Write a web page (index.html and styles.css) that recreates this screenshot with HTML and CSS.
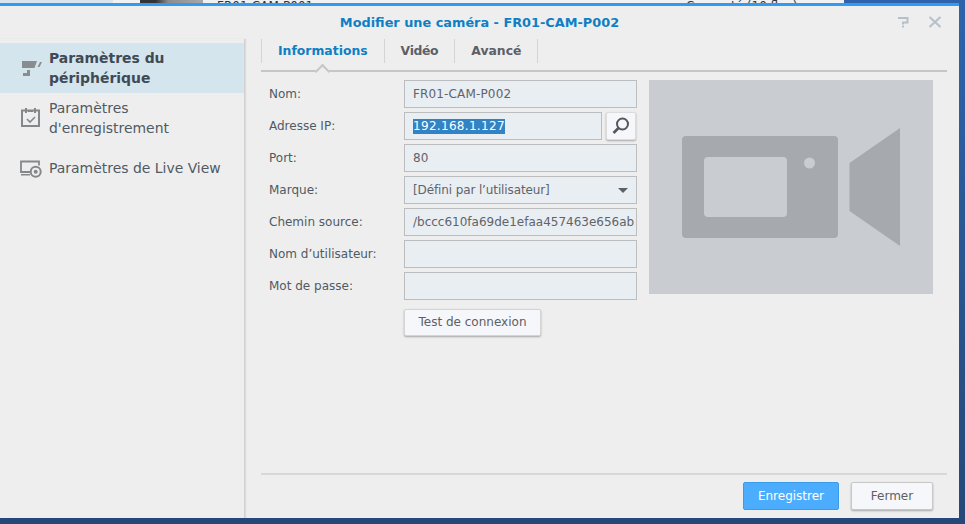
FILE: index.html
```html
<!DOCTYPE html>
<html lang="fr">
<head>
<meta charset="utf-8">
<title>Modifier une caméra</title>
<link rel="stylesheet" href="styles.css">
</head>
<body>
<div class="backdrop">
  <div class="backdrop-left"></div>
  <div class="backdrop-list">
    <div class="thumb"></div>
    <div class="cut-name">FR01-CAM-P001</div>
    <div class="cut-status">Connecté (10 flux)</div>
  </div>
</div>
<div class="window">
  <header class="titlebar">
    <div class="title">Modifier une caméra - FR01-CAM-P002</div>
    <div class="win-tools">
      <svg class="tool" width="14" height="12" viewBox="0 0 14 12"><path d="M1 2H10.500V6.500H6V8.500" fill="none" stroke="#b4c0cb" stroke-width="2"/><rect x="5" y="9.500" width="2" height="2" fill="#b4c0cb"/></svg>
      <svg class="tool" width="14" height="12" viewBox="0 0 14 12"><path d="M1.500 1L12.500 11M12.500 1L1.500 11" fill="none" stroke="#b4c0cb" stroke-width="2"/></svg>
    </div>
  </header>
  <div class="body">
    <nav class="sidebar">
      <div class="nav-item active">
        <svg class="nav-icon" width="22" height="22" viewBox="0 0 22 22"><path d="M2 4H17L14.500 11H2Z" fill="#8a8d90"/><path d="M20 5H22L19.500 10H17.500Z" fill="#8a8d90"/><path d="M7 13H10V19H3V16H7Z" fill="#8a8d90"/></svg>
        <span>Paramètres du périphérique</span>
      </div>
      <div class="nav-item">
        <svg class="nav-icon" width="22" height="22" viewBox="0 0 22 22"><rect x="2" y="3.500" width="17" height="15.500" fill="none" stroke="#85888b" stroke-width="2"/><rect x="5" y="1" width="2" height="5" fill="#85888b"/><rect x="14" y="1" width="2" height="5" fill="#85888b"/><rect x="8" y="3" width="5" height="2" fill="#85888b"/><path d="M7 12L10 15L15 10" fill="none" stroke="#85888b" stroke-width="1.600"/></svg>
        <span>Paramètres d'enregistrement</span>
      </div>
      <div class="nav-item single">
        <svg class="nav-icon" width="22" height="22" viewBox="0 0 22 22"><path d="M10 15H1V4.500H19V8.500" fill="none" stroke="#85888b" stroke-width="1.800"/><rect x="1" y="17" width="9" height="1.500" fill="#85888b"/><circle cx="15.700" cy="14.700" r="5" fill="none" stroke="#85888b" stroke-width="2"/><circle cx="15.700" cy="14.700" r="2" fill="#85888b"/></svg>
        <span>Paramètres de Live View</span>
      </div>
    </nav>
    <main class="main">
      <div class="tabs">
        <div class="tab current">Informations</div>
        <div class="tab narrow">Vidéo</div>
        <div class="tab">Avancé</div>
      </div>
      <div class="content">
        <form class="form">
          <div class="row"><label>Nom:</label><div class="field wide-text">FR01-CAM-P002</div></div>
          <div class="row"><label>Adresse IP:</label>
            <div class="field short"><span class="selected">192.168.1.127</span></div>
            <div class="icon-btn">
              <svg width="20" height="20" viewBox="0 0 20 20"><circle cx="11.500" cy="8" r="5.500" fill="none" stroke="#54585c" stroke-width="2"/><path d="M7.500 12L2.500 17" stroke="#54585c" stroke-width="2.600" fill="none"/></svg>
            </div>
          </div>
          <div class="row"><label>Port:</label><div class="field wide-text">80</div></div>
          <div class="row"><label>Marque:</label><div class="field select">[Défini par l’utilisateur]<i class="caret"></i></div></div>
          <div class="row"><label>Chemin source:</label><div class="field clip"><span>/bccc610fa69de1efaa457463e656ab5f</span></div></div>
          <div class="row"><label>Nom d’utilisateur:</label><div class="field"></div></div>
          <div class="row"><label>Mot de passe:</label><div class="field"></div></div>
          <div class="row test-row"><div class="btn test">Test de connexion</div></div>
        </form>
        <div class="preview">
          <svg width="220" height="120" viewBox="0 0 220 120">
            <rect x="0" y="9" width="156" height="102" rx="4" fill="#a6a9ad"/>
            <rect x="22" y="30" width="83" height="60" rx="4" fill="#c9ccd0"/>
            <circle cx="127.500" cy="36" r="5.500" fill="#c9ccd0"/>
            <path d="M167.500 36L218 1V119L167.500 84Z" fill="#a6a9ad"/>
          </svg>
        </div>
      </div>
      <footer class="footer">
        <div class="btn primary">Enregistrer</div>
        <div class="btn close">Fermer</div>
      </footer>
    </main>
  </div>
</div>
</body>
</html>
```
FILE: styles.css
```css
* { box-sizing: border-box; }
html, body { margin: 0; height: 100%; }
body {
  width: 965px;
  height: 524px;
  overflow: hidden;
  background: linear-gradient(#2e63ab, #254878);
  font-family: "DejaVu Sans", Verdana, sans-serif;
  font-size: 12px;
  color: #505a64;
  display: flex;
  flex-direction: column;
}
.backdrop { height: 3px; flex: none; display: flex; overflow: hidden; }
.backdrop-left { width: 113px; background: #dbe5ee; }
.backdrop-list {
  width: 731px;
  background: #f1f1f1;
  display: flex;
  padding-left: 27px;
  color: #333;
  line-height: 12px;
}
.thumb { width: 63px; height: 3px; background: linear-gradient(90deg, #333 0 25%, #8c8c8c 45%, #a8a8a8); }
.cut-name { margin-left: 14px; margin-top: 0; width: 469px; white-space: nowrap; }
.cut-status { margin-top: 0; white-space: nowrap; }
.window {
  width: 959px;
  height: 515px;
  flex: none;
  background: #eeeeee;
  border-top: 3px solid #2f9bf4;
  display: flex;
  flex-direction: column;
}
.titlebar {
  height: 33px;
  flex: none;
  display: flex;
  align-items: center;
  justify-content: center;
  position: relative;
}
.title { color: #0f7fc4; font-size: 12.870px; font-weight: bold; }
.win-tools {
  position: absolute;
  right: 17px;
  top: 10px;
  display: flex;
  gap: 17px;
}
.body { flex: 1; display: flex; min-height: 0; }
.sidebar {
  width: 245px;
  flex: none;
  border-right: 1px solid #d2d2d2;
  box-shadow: 1px 0 1px rgba(0,0,0,.08);
  padding-top: 4px;
}
.nav-item {
  display: flex;
  align-items: center;
  height: 50px;
  padding-left: 20px;
  gap: 7px;
  font-size: 13.950px;
  line-height: 20px;
  color: #505a64;
}
.nav-item span { width: 175px; }
.nav-icon { flex: none; }
.nav-item.active { background: #d5e5ee; font-weight: bold; color: #3e4a55; }
.main {
  flex: 1;
  display: flex;
  flex-direction: column;
  margin-left: 16px;
  margin-right: 12px;
  min-width: 0;
}
.tabs {
  display: flex;
  height: 33px;
  flex: none;
  border-bottom: 2px solid #c6c6c6;
  align-items: flex-start;
  position: relative;
}
.tab {
  height: 24px;
  padding: 0 16px;
  line-height: 23px;
  font-size: 12.400px;
  font-weight: bold;
  color: #5c6066;
  border-right: 1px solid #d4d4d4;
}
.tab.narrow { letter-spacing: -.35px; }
.tab.current { color: #0f7fc4; border-left: 1px solid #d4d4d4; position: relative; }
.tab.current::after {
  content: "";
  position: absolute;
  left: 55px;
  top: 27px;
  width: 9px;
  height: 9px;
  background: #eeeeee;
  border-top: 2px solid #c6c6c6;
  border-left: 2px solid #c6c6c6;
  transform: rotate(45deg);
}
.content {
  flex: 1;
  display: flex;
  padding-top: 8px;
  padding-left: 8px;
  min-height: 0;
}
.form { width: 368px; flex: none; display: flex; flex-direction: column; gap: 4px; }
.row { display: flex; height: 28px; align-items: center; }
.row label { width: 135px; flex: none; padding-bottom: 1px; color: #505a64; }
.field {
  width: 233px;
  height: 28px;
  background: #e9eef3;
  border: 1px solid #bcbdbf;
  padding: 0 8px;
  line-height: 27px;
  color: #5f646a;
  white-space: nowrap;
  position: relative;
}
.wide-text { letter-spacing: .15px; }
.select { letter-spacing: -.12px; }
.field.short { width: 198px; display: flex; align-items: center; }
.clip { overflow: hidden; padding-right: 0; }
.clip span { display: block; width: 222px; overflow: hidden; }
.selected {
  background: #3282c6;
  color: #fff;
  display: block;
  line-height: 15px;
  height: 15px;
  letter-spacing: .31px;
}
.caret {
  position: absolute;
  right: 8px;
  top: 11px;
  border-style: solid;
  border-width: 5px 5.500px 0;
  border-color: #5a6068 transparent transparent;
}
.icon-btn {
  width: 30px;
  height: 28px;
  margin-left: 4px;
  background: #f6f7fa;
  border: 1px solid #dcdcdc;
  border-radius: 2px;
  box-shadow: 0 1px 2px rgba(0,0,0,.3);
  display: flex;
  align-items: center;
  justify-content: center;
}
.btn {
  height: 28px;
  display: flex;
  align-items: center;
  justify-content: center;
  border-radius: 2px;
  background: #f6f7fa;
  border: 1px solid #d4d4d4;
  box-shadow: 0 1px 2px rgba(0,0,0,.3);
  color: #5c6066;
}
.test-row { margin-top: 4px; padding-left: 135px; }
.test { width: 137px; height: 27px; }
.preview {
  width: 284px;
  height: 214px;
  margin-left: 12px;
  background: #c9ccd0;
  display: flex;
  align-items: center;
  justify-content: center;
  padding-left: 33px;
  padding-right: 31px;
}
.footer {
  height: 45px;
  flex: none;
  border-top: 2px solid #d8d8d8;
  display: flex;
  justify-content: flex-end;
  align-items: flex-start;
  padding-top: 7px;
  padding-right: 14px;
  gap: 12px;
}
.primary {
  width: 96px;
  background: #4cadff;
  border-color: #3a9be8;
  box-shadow: none;
  color: #fff;
}
.close { width: 82px; border-color: #c8c8c8; }
```
